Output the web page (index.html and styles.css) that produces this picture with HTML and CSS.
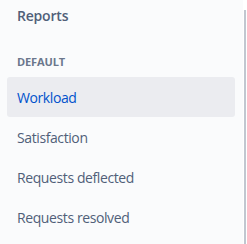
FILE: index.html
```html
<!DOCTYPE html>
<html lang="en">

<head>
    <meta charset="UTF-8" />
    <title>Reports</title>
    <link rel="stylesheet" href="styles.css">
</head>

<body>
    <div class="page">
        <nav class="sidebar">
            <h2 class="sidebar-title">Reports</h2>
            <div class="group-label">DEFAULT</div>
            <ul class="nav-list">
                <li class="nav-item active">Workload</li>
                <li class="nav-item">Satisfaction</li>
                <li class="nav-item">Requests deflected</li>
                <li class="nav-item">Requests resolved</li>
            </ul>
        </nav>
        <div class="scroll-edge">
            <div class="scroll-thumb"></div>
        </div>
    </div>
</body>

</html>
```

FILE: styles.css
```css
body {
    margin: 0;
    font-family: "Open Sans", "Noto Sans", sans-serif;
    background: #fff;
}

.page {
    display: flex;
    height: 244px;
}

.sidebar {
    width: 243px;
    background: #fafbfc;
    padding: 0 8px 0 7px;
    box-sizing: border-box;
}

.sidebar-title {
    margin: 0;
    padding: 5px 10px 0;
    height: 43px;
    box-sizing: border-box;
    font-size: 14px;
    font-weight: 600;
    line-height: 22px;
    letter-spacing: -0.2px;
    color: #505f79;
}

.group-label {
    padding: 11px 10px 0;
    height: 34px;
    box-sizing: border-box;
    font-size: 11px;
    font-weight: 700;
    line-height: 16px;
    letter-spacing: -0.1px;
    color: #6b778c;
}

.nav-list {
    list-style: none;
    margin: 0;
    padding: 0;
}

.nav-item {
    height: 40px;
    padding: 0 10px;
    display: flex;
    align-items: center;
    border-radius: 3px;
    font-size: 14px;
    letter-spacing: -0.4px;
    color: #505f79;
}

.nav-item.active {
    background: #ebecf0;
    color: #0052cc;
}

.scroll-edge {
    width: 4px;
    padding-top: 10px;
}

.scroll-thumb {
    width: 2px;
    height: 100%;
    margin-left: 1px;
    background: #c1c7d0;
}
```
